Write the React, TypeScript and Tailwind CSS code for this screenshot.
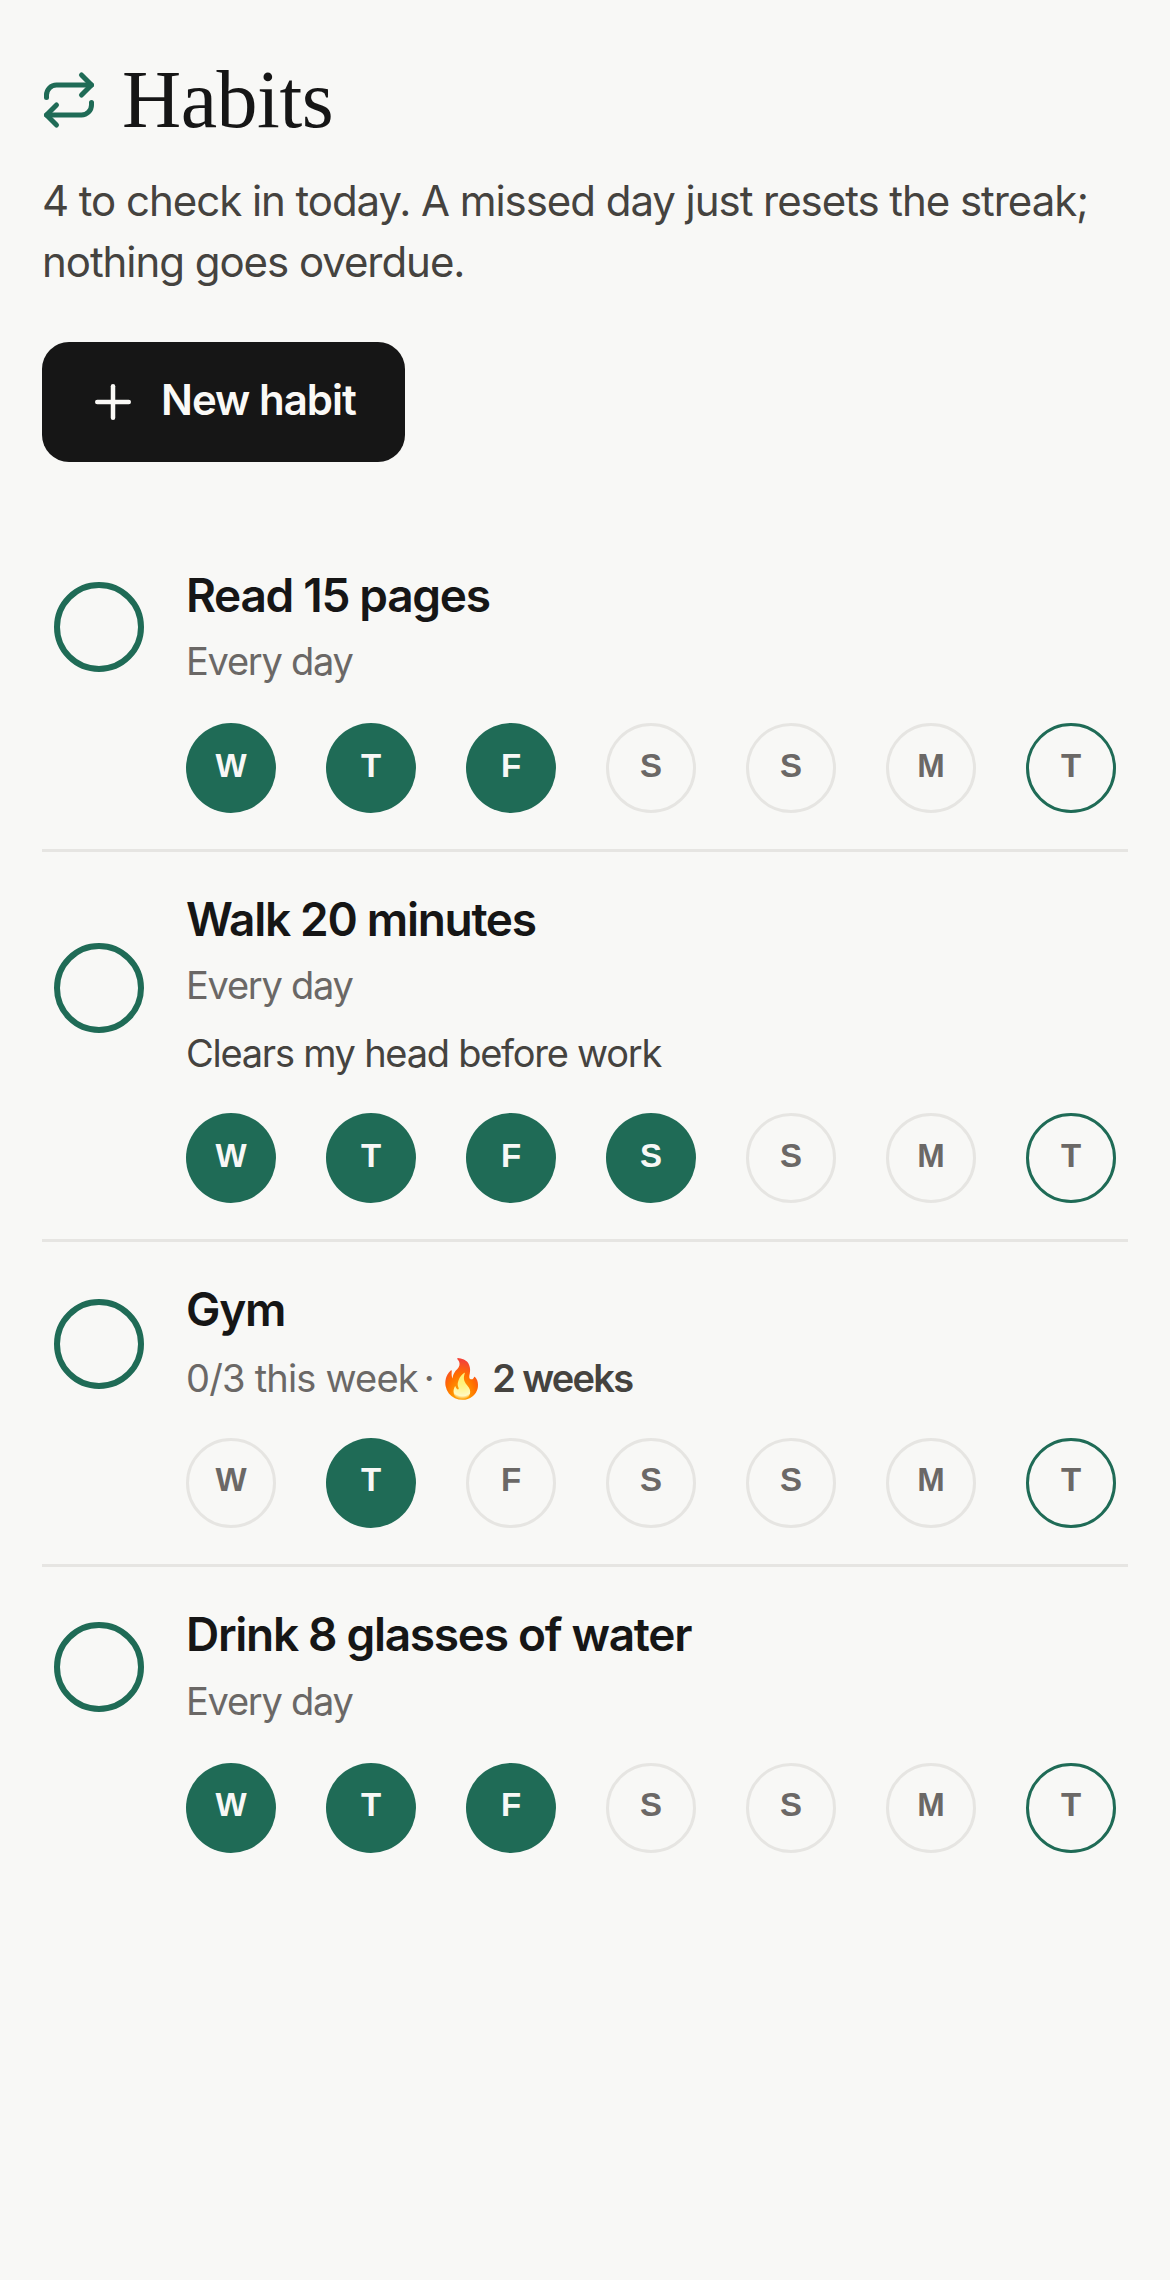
import { Plus, Repeat } from 'lucide-react';

type Day = { label: string; done?: boolean; today?: boolean };

const labels = ['W', 'T', 'F', 'S', 'S', 'M', 'T'];

function week(doneIndexes: number[]): Day[] {
  return labels.map((label, index) => ({
    label,
    done: doneIndexes.includes(index),
    today: index === 6,
  }));
}

function DayDot({ day }: { day: Day }) {
  const tone = day.done
    ? 'bg-[#1f6b56] text-[#f8f8f6]'
    : day.today
      ? 'border-[3px] border-[#1f6b56] text-[#6b6866]'
      : 'border-[3px] border-[#e6e5e2] text-[#6b6866]';

  return (
    <div
      className={`w-[90px] h-[90px] rounded-full flex items-center justify-center pb-[5px] font-['Liberation_Sans',sans-serif] font-bold text-[33px] ${tone}`}
    >
      {day.label}
    </div>
  );
}

function HabitRow({
  title,
  doneIndexes,
  children,
  tickClass = '',
  last,
}: {
  title: string;
  doneIndexes: number[];
  children: React.ReactNode;
  tickClass?: string;
  last?: boolean;
}) {
  return (
    <div
      className={`px-[12px] pt-[34px] pb-[36px] ${last ? '' : 'border-b-[3px] border-[#e6e5e2]'}`}
    >
      <div className="flex items-center gap-[42px]">
        <div
          className={`w-[90px] h-[90px] shrink-0 rounded-full border-[6px] border-[#1f6b56] ${tickClass}`}
        />

        <div className="flex-1">
          <div className="text-[46px] leading-[66px] font-semibold tracking-[-1.3px] text-[#161616]">
            {title}
          </div>
          <div className="mt-[3px] text-[38px] leading-[60px] tracking-[-1.25px] text-[#6b6866]">
            {children}
          </div>
        </div>
      </div>

      <div className="mt-[32px] pl-[132px] flex justify-between">
        {week(doneIndexes).map((day, index) => (
          <DayDot key={index} day={day} />
        ))}
      </div>
    </div>
  );
}

export default function App() {
  return (
    <div className="min-h-[2280px] bg-[#f8f8f6] px-[42px] pt-[52px] font-['Inter',sans-serif]">
      <header>
        <div className="flex items-center gap-[23px] -ml-[3px]">
          <Repeat size={60} className="text-[#1f6b56]" />
          <h1 className="font-['Liberation_Serif',serif] text-[82px] leading-[96px] tracking-[-0.5px] text-[#161616]">
            Habits
          </h1>
        </div>

        <p className="mt-[22px] text-[42px] leading-[61px] tracking-[-1.05px] text-[#45433f]">
          4 to check in today. A missed day just resets the streak;
          <br />
          nothing goes overdue.
        </p>

        <button className="mt-[50px] h-[120px] w-[363px] rounded-[27px] bg-[#161616] flex items-center gap-[21px] pl-[44px] text-[#faf9f6]">
          <Plus size={54} />
          <span className="pb-[6px] text-[42px] font-semibold tracking-[-1px]">New habit</span>
        </button>
      </header>

      <div className="mt-[66px]">
        <HabitRow title="Read 15 pages" doneIndexes={[0, 1, 2]}>
          Every day
        </HabitRow>

        <HabitRow title="Walk 20 minutes" doneIndexes={[0, 1, 2, 3]} tickClass="mt-[8px]">
          Every day
          <div className="mt-[11px] leading-[55px] text-[#45433f]">Clears my head before work</div>
        </HabitRow>

        <HabitRow title="Gym" doneIndexes={[1]} tickClass="mt-[6px]">
          <div className="mt-[6px] -mb-[2.5px] whitespace-nowrap">
            <span className="tracking-[-0.8px]">0/3 this week</span>
            <span className="ml-[6px]">·</span>
            <span className="ml-[4px]">🔥</span>
            <span className="ml-[9px] font-semibold tracking-[-1.7px] text-[#45433f]">2 weeks</span>
          </div>
        </HabitRow>

        <HabitRow title="Drink 8 glasses of water" doneIndexes={[0, 1, 2]} tickClass="mt-[2px]" last>
          <div className="mt-[4px]">Every day</div>
        </HabitRow>
      </div>
    </div>
  );
}
